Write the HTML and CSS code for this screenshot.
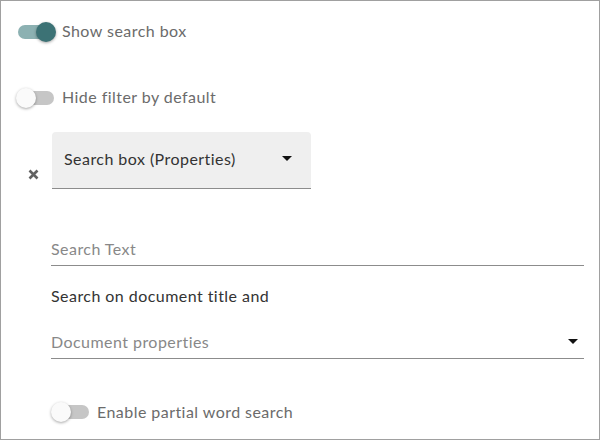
FILE: index.html
```html
<!DOCTYPE html>
<html lang="en">
<head>
    <title>Search box settings</title>
    <link rel="stylesheet" href="styles.css">
</head>
<body>
    <div class="panel">
        <label class="switch-row">
            <span class="switch on"><span class="track"></span><span class="thumb"></span></span>
            <span class="switch-label">Show search box</span>
        </label>

        <label class="switch-row row-second">
            <span class="switch"><span class="track"></span><span class="thumb"></span></span>
            <span class="switch-label">Hide filter by default</span>
        </label>

        <div class="filter-row">
            <span class="remove">
                <svg width="11" height="11" viewBox="0 0 11 11">
                    <path d="M1.5 1.5 L9.5 9.5 M9.5 1.5 L1.5 9.5" stroke="#626262" stroke-width="2.6" stroke-linecap="butt"/>
                </svg>
            </span>
            <div class="select filled">
                <span class="select-text">Search box (Properties)</span>
                <span class="caret"></span>
            </div>
        </div>

        <div class="field search-field">
            <span class="placeholder">Search Text</span>
        </div>

        <div class="field-label">Search on document title and</div>

        <div class="field select-field">
            <span class="placeholder">Document properties</span>
            <span class="caret"></span>
        </div>

        <label class="switch-row row-partial">
            <span class="switch"><span class="track"></span><span class="thumb"></span></span>
            <span class="switch-label">Enable partial word search</span>
        </label>
    </div>
</body>
</html>
```

FILE: styles.css
```css
html, body {
    margin: 0;
    padding: 0;
}
body {
    font-family: Lato, "Open Sans", sans-serif;
    font-size: 16px;
    letter-spacing: 0.45px;
    background: white;
}
.panel {
    box-sizing: border-box;
    width: 600px;
    height: 440px;
    border: 1px solid #a0a0a0;
    padding: 21px 15px 0 15px;
    overflow: hidden;
}
.switch-row {
    display: flex;
    align-items: center;
    height: 20px;
    gap: 6px;
}
.row-second {
    margin-top: 46px;
}
.row-partial {
    margin-top: 43px;
    margin-left: 35px;
}
.row-partial .switch-label {
    margin-top: 0;
}
.switch {
    position: relative;
    width: 40px;
    height: 20px;
    flex-shrink: 0;
}
.switch .track {
    position: absolute;
    left: 2px;
    top: 3px;
    width: 36px;
    height: 14px;
    border-radius: 7px;
    background: #c6c6c6;
}
.switch .thumb {
    position: absolute;
    left: 0;
    top: 0;
    width: 20px;
    height: 20px;
    border-radius: 50%;
    background: #fafafa;
    box-shadow: 0 1px 3px rgba(0, 0, 0, 0.35);
}
.switch.on .track {
    background: #8cb1b2;
}
.switch.on .thumb {
    left: 20px;
    background: #3c7275;
}
.switch-label {
    color: #6b6b6b;
    line-height: 20px;
    margin-top: -2px;
}
.filter-row {
    display: flex;
    align-items: flex-end;
    margin-top: 24px;
    margin-left: 12px;
}
.remove {
    display: flex;
    width: 24px;
    height: 11px;
    margin-bottom: 9px;
}
.select {
    box-sizing: border-box;
    display: flex;
    align-items: center;
    justify-content: space-between;
    width: 259px;
    height: 57px;
    padding: 0 19px 3px 12px;
    border-bottom: 1px solid #8c8c8c;
}
.filled {
    background: #efefef;
    border-radius: 4px 4px 0 0;
}
.select-text {
    color: #333;
}
.caret {
    width: 0;
    height: 0;
    border-left: 5px solid transparent;
    border-right: 5px solid transparent;
    border-top: 5px solid #111;
}
.field {
    box-sizing: border-box;
    display: flex;
    align-items: center;
    justify-content: space-between;
    margin-left: 35px;
    height: 34px;
    border-bottom: 1px solid #8c8c8c;
}
.search-field {
    margin-top: 43px;
}
.select-field {
    margin-top: 18px;
    height: 35px;
    padding-right: 6px;
}
.placeholder {
    color: #888;
}
.field-label {
    margin-left: 35px;
    margin-top: 20px;
    line-height: 20px;
    color: #333;
}
```
